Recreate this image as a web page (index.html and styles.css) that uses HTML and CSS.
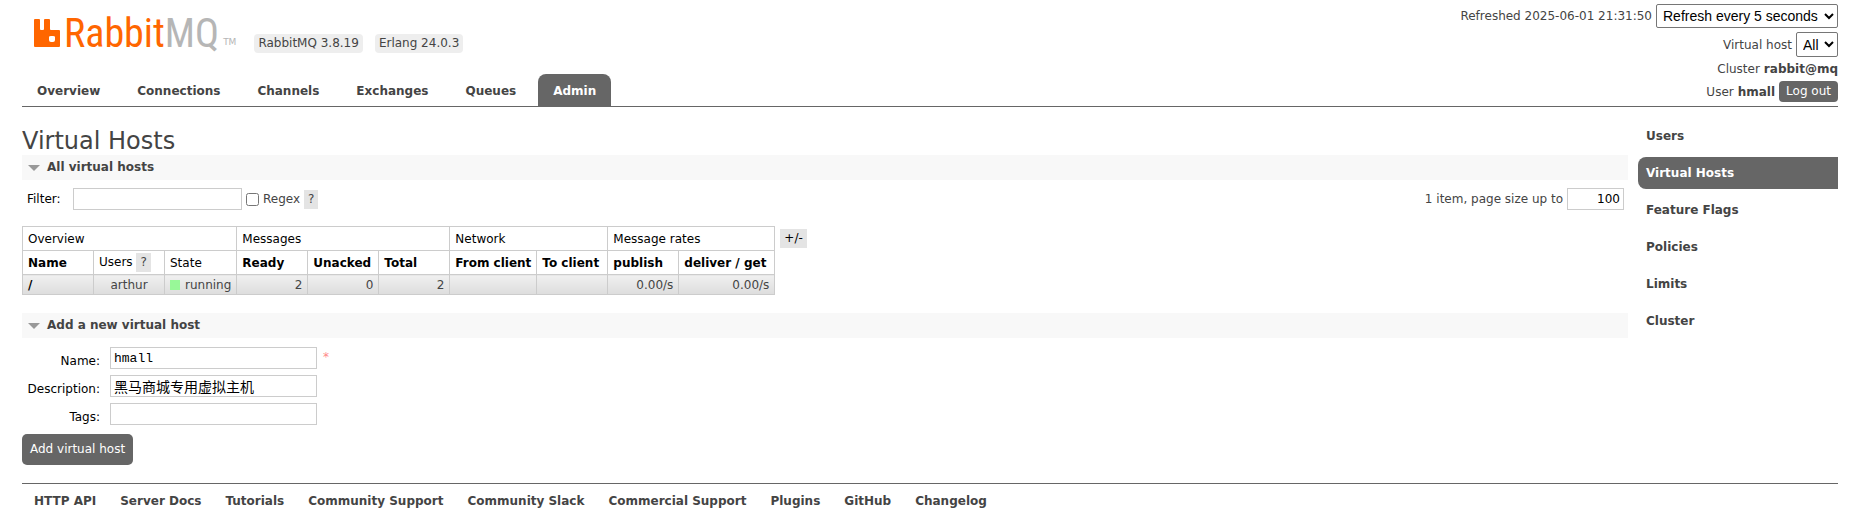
FILE: index.html
```html
<!DOCTYPE html>
<html lang="en">
<head>
<meta charset="utf-8">
<title>RabbitMQ Management</title>
<link rel="stylesheet" href="styles.css">
</head>
<body>
<header class="header">
  <div class="header-left">
    <div class="brand">
      <a class="logo" href="#">
        <svg class="logo-mark" viewBox="0 0 26 28" aria-hidden="true"><path fill-rule="evenodd" d="M1 0H5Q6 0 6 1V10Q6 11 7 11H9Q10 11 10 10V1Q10 0 11 0H15Q16 0 16 1V10Q16 11 17 11H25Q26 11 26 12V27Q26 28 25 28H1Q0 28 0 27V1Q0 0 1 0ZM17 17Q15 17 15 18V21Q15 23 17 23H19Q21 23 21 21V18Q21 17 19 17Z"/></svg>
        <span class="logo-rabbit">Rabbit</span><span class="logo-mq">MQ</span><span class="logo-tm">TM</span>
      </a>
      <span class="version">RabbitMQ 3.8.19</span>
      <span class="version">Erlang 24.0.3</span>
    </div>
    <nav class="tabs">
      <a href="#">Overview</a>
      <a href="#">Connections</a>
      <a href="#">Channels</a>
      <a href="#">Exchanges</a>
      <a href="#">Queues</a>
      <a href="#" class="selected">Admin</a>
    </nav>
  </div>
  <div class="status">
    <div class="status-row"><label for="refresh">Refreshed 2025-06-01 21:31:50</label><select id="refresh" class="refresh"><option>Refresh every 5 seconds</option></select></div>
    <div class="status-row"><label for="vhost">Virtual host</label><select id="vhost" class="vhost"><option>All</option></select></div>
    <div class="status-row cluster">Cluster <b>rabbit@mq</b></div>
    <div class="status-row">User <b>hmall</b><button class="logout" type="button">Log out</button></div>
  </div>
</header>

<div class="content">
  <main class="main">
    <h1>Virtual Hosts</h1>
    <section>
      <h2>All virtual hosts</h2>
      <div class="filter">
        <div class="filter-group">
          <label class="filter-label" for="filter">Filter:</label>
          <input id="filter" class="filter-input" type="text">
          <input id="regex" class="regex" type="checkbox"><label for="regex">Regex</label>
          <button class="help" type="button">?</button>
        </div>
        <div class="filter-group">
          <label for="pagesize">1 item, page size up to</label>
          <input id="pagesize" class="pagesize" type="text" value="100">
        </div>
      </div>
      <div class="table-wrap">
        <table class="list">
          <thead>
            <tr><th colspan="3">Overview</th><th colspan="3">Messages</th><th colspan="2">Network</th><th colspan="2">Message rates</th></tr>
            <tr class="columns">
              <th class="c71"><b>Name</b></th><th class="c71">Users <button class="help" type="button">?</button></th><th class="c72">State</th>
              <th class="c71"><b>Ready</b></th><th class="c71"><b>Unacked</b></th><th class="c71"><b>Total</b></th>
              <th class="c87"><b>From client</b></th><th class="c71"><b>To client</b></th>
              <th class="c71"><b>publish</b></th><th class="c96"><b>deliver / get</b></th>
            </tr>
          </thead>
          <tbody>
            <tr>
              <td><a class="name" href="#">/</a></td><td class="center">arthur</td><td><span class="running">running</span></td>
              <td class="num">2</td><td class="num">0</td><td class="num">2</td><td></td><td></td>
              <td class="num">0.00/s</td><td class="num">0.00/s</td>
            </tr>
          </tbody>
        </table>
        <button class="help columns-toggle" type="button">+/-</button>
      </div>
    </section>
    <section>
      <h2>Add a new virtual host</h2>
      <form class="form">
        <div class="fields">
          <label for="name">Name:</label><div class="field"><input id="name" type="text" value="hmall"><span class="mand">*</span></div>
          <label for="description">Description:</label><div class="field"><input id="description" class="cjk" type="text" value="黑马商城专用虚拟主机"></div>
          <label for="tags">Tags:</label><div class="field"><input id="tags" type="text"></div>
        </div>
        <button class="submit" type="button">Add virtual host</button>
      </form>
    </section>
  </main>
  <nav class="side">
    <a href="#">Users</a>
    <a href="#" class="selected">Virtual Hosts</a>
    <a href="#">Feature Flags</a>
    <a href="#">Policies</a>
    <a href="#">Limits</a>
    <a href="#">Cluster</a>
  </nav>
</div>

<footer class="footer">
  <a href="#">HTTP API</a>
  <a href="#">Server Docs</a>
  <a href="#">Tutorials</a>
  <a href="#">Community Support</a>
  <a href="#">Community Slack</a>
  <a href="#">Commercial Support</a>
  <a href="#">Plugins</a>
  <a href="#">GitHub</a>
  <a href="#">Changelog</a>
</footer>
</body>
</html>
```

FILE: styles.css
```css
* { box-sizing: border-box; }

body {
  margin: 0;
  padding: 0 30px 0 22px;
  background: #fff;
  color: #444;
  font: 12px/18px Verdana, "DejaVu Sans", sans-serif;
}

a { color: #444; text-decoration: none; }
button, input, select { font: inherit; margin: 0; }

/* Header */
.header {
  display: flex;
  justify-content: space-between;
  border-bottom: 1px solid #666;
}
.header-left {
  display: flex;
  flex-direction: column;
  justify-content: space-between;
}
.brand {
  display: flex;
  align-items: flex-end;
  gap: 12px;
  padding: 13px 0 0 12px;
}
.logo {
  display: flex;
  align-items: flex-end;
  height: 40px;
  margin-right: 6px;
  padding-bottom: 6px;
  font-family: "Roboto Condensed", "Roboto", sans-serif;
  font-size: 40px;
  font-weight: 400;
  line-height: 26px;
}
.logo-mark { width: 26px; height: 28px; margin-right: 4px; fill: #f60; }
.logo-rabbit { color: #f60; }
.logo-mq { color: #b6b6b6; }
.logo-tm {
  margin-left: 4px;
  color: #b6b6b6;
  font: 9px/10px "DejaVu Sans", sans-serif;
}
.version {
  padding: 0 4px;
  border-radius: 4px;
  background: #eee;
  line-height: 19px;
}
.tabs { display: flex; gap: 7px; }
.tabs a {
  padding: 8px 15px 6px;
  border-radius: 8px 8px 0 0;
  font-weight: bold;
}
.tabs a.selected { background: #666; color: #fff; }

.status {
  display: flex;
  flex-direction: column;
  align-items: flex-end;
  gap: 4px;
  padding: 4px 0;
}
.status-row { display: flex; align-items: center; gap: 4px; }
.status select {
  border: 1px solid #767676;
  border-radius: 2px;
  background: #fff;
  color: #000;
  font: 14px "Liberation Sans", Arial, sans-serif;
}
.status .refresh { width: 182px; height: 24px; padding: 0 2px; }
.status .vhost { width: 42px; height: 25px; padding: 0 2px; }
.cluster { line-height: 16px; }
.logout {
  padding: 0 7px;
  border: 0;
  border-radius: 4px;
  background: #666;
  color: #fff;
  line-height: 21px;
}

/* Body columns */
.content { display: flex; gap: 10px; }
.main { flex: 1; padding-top: 20px; }
h1 {
  margin: 0;
  font-size: 24px;
  font-weight: normal;
  line-height: 28px;
}
h2 {
  display: flex;
  align-items: center;
  gap: 7px;
  margin: 0;
  padding: 0 6px;
  background: #f8f8f8;
  font-size: 12px;
  line-height: 25px;
}
h2::before {
  content: "";
  border: 6px solid transparent;
  border-top-color: #999;
  border-bottom: 0;
}

.side {
  display: flex;
  flex-direction: column;
  gap: 5px;
  width: 200px;
  padding-top: 13px;
}
.side a {
  padding: 7px 8px;
  border-radius: 8px 0 0 8px;
  font-weight: bold;
}
.side a.selected { background: #666; color: #fff; }

/* Filter bar */
input[type="text"] {
  height: 22px;
  padding: 0 3px;
  border: 1px solid #ccc;
  background: #fff;
  color: #000;
}
.filter {
  display: flex;
  justify-content: space-between;
  padding: 8px 4px 16px 5px;
}
.filter-group { display: flex; align-items: center; gap: 4px; }
.filter-label { width: 42px; color: #000; }
.filter .filter-input { width: 169px; }
.regex { width: 13px; height: 13px; }
.filter .pagesize { width: 57px; text-align: right; }
.help {
  padding: 0 4px;
  border: 0;
  background: #e4e4e4;
  color: #444;
  line-height: 19px;
}

/* Table */
.table-wrap {
  display: flex;
  align-items: flex-start;
  gap: 5px;
  margin-bottom: 18px;
}
.list { border-collapse: collapse; table-layout: fixed; }
.list th, .list td {
  height: 24px;
  padding: 0 5px;
  border: 1px solid #ccc;
  text-align: left;
  white-space: nowrap;
}
.list th { color: #000; font-weight: normal; }
.list td {
  height: 20px;
  background: linear-gradient(#f0f0f0, #ddd);
}
.list .num { text-align: right; }
.list .center { text-align: center; }
.list .name { color: #000; font-weight: bold; }
.c71 { width: 71px; }
.c72 { width: 72px; }
.c87 { width: 87px; }
.c96 { width: 96px; }
.running::before {
  content: "";
  display: inline-block;
  width: 10px;
  height: 10px;
  margin-right: 5px;
  background: #98f898;
  vertical-align: -1px;
}
.columns-toggle { margin-top: 3px; color: #000; }

/* Form */
.form { padding-top: 9px; }
.fields {
  display: grid;
  grid-template-columns: 78px auto;
  gap: 6px 10px;
}
.fields label { padding-top: 6px; line-height: 16px; text-align: right; color: #000; }
.field { display: flex; gap: 6px; }
.fields input[type="text"] {
  width: 207px;
  font: 13px "Liberation Mono", "Courier New", monospace;
}
.fields input.cjk[type="text"] { font: 14px "Noto Sans CJK SC", sans-serif; }
.mand { color: #f88; line-height: 20px; }
.submit {
  margin-top: 9px;
  padding: 0 8px;
  border: 0;
  border-radius: 5px;
  background: #666;
  color: #fff;
  line-height: 31px;
}

/* Footer */
.footer {
  display: flex;
  flex-wrap: wrap;
  gap: 24px;
  margin-top: 18px;
  padding: 8px 12px;
  border-top: 1px solid #666;
}
.footer a { font-weight: bold; }
```
